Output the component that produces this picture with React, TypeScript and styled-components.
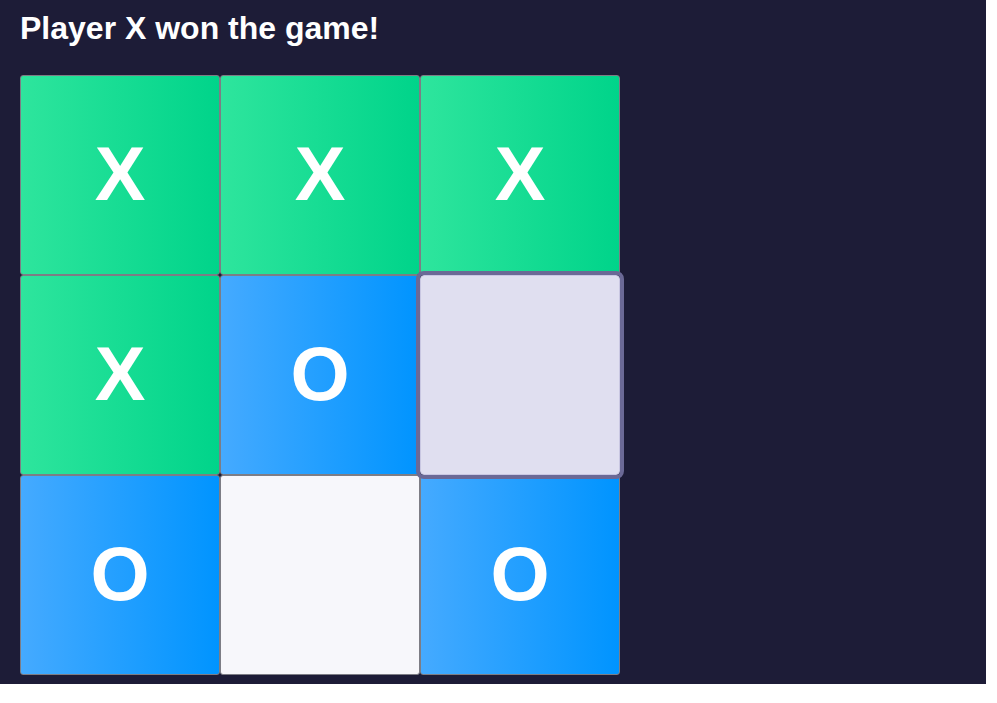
import React from "react";
import styled, { createGlobalStyle, css } from "styled-components";

const GlobalStyle = createGlobalStyle`
  html, body { margin: 0; padding: 0; background: #ffffff; }
  body { font-family: "Liberation Sans", Arial, sans-serif; }
`;

const Page = styled.div`
  box-sizing: border-box;
  width: 986px;
  height: 684px;
  background: #1d1c37;
  padding: 10px 20px 0;
`;

const Title = styled.h1`
  margin: 0 0 28px;
  font-size: 32px;
  line-height: 37px;
  font-weight: 700;
  color: #ffffff;
`;

const Board = styled.div`
  display: grid;
  grid-template-columns: repeat(3, 200px);
  grid-template-rows: repeat(3, 200px);
  width: 600px;
`;

type Mark = "X" | "O" | "";

const Cell = styled.div<{ $mark: Mark; $focused?: boolean }>`
  box-sizing: border-box;
  display: flex;
  align-items: center;
  justify-content: center;
  padding-bottom: 3px;
  border: 1px solid #7d7d85;
  border-radius: 3px;
  font-size: 76px;
  font-weight: 700;
  color: #ffffff;
  background: #f7f7fb;
  ${(p) =>
    p.$mark === "X" &&
    css`
      background: linear-gradient(90deg, #2ee59d 0%, #00d48a 100%);
    `}
  ${(p) =>
    p.$mark === "O" &&
    css`
      background: linear-gradient(90deg, #45aaff 0%, #0094ff 100%);
    `}
  ${(p) =>
    p.$focused &&
    css`
      position: relative;
      z-index: 1;
      background: #e0dff0;
      border-color: #c9c7e2;
      outline: 4px solid #6b6996;
      outline-offset: 0;
      border-radius: 4px;
    `}
`;

const cells: { mark: Mark; focused?: boolean }[] = [
  { mark: "X" },
  { mark: "X" },
  { mark: "X" },
  { mark: "X" },
  { mark: "O" },
  { mark: "", focused: true },
  { mark: "O" },
  { mark: "" },
  { mark: "O" },
];

export default function App() {
  return (
    <>
      <GlobalStyle />
      <Page>
        <Title>Player X won the game!</Title>
        <Board>
          {cells.map((c, i) => (
            <Cell key={i} $mark={c.mark} $focused={c.focused}>
              {c.mark}
            </Cell>
          ))}
        </Board>
      </Page>
    </>
  );
}
